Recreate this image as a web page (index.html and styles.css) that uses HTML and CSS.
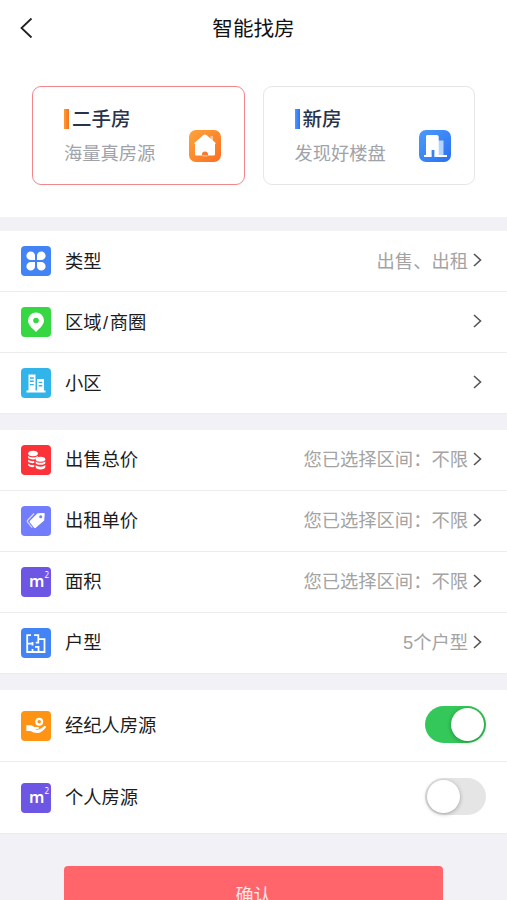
FILE: index.html
```html
<!DOCTYPE html>
<html lang="zh-CN">
<head>
    <meta charset="UTF-8">
    <meta name="viewport" content="width=device-width, initial-scale=1.0">
    <title>智能找房</title>
    <link rel="stylesheet" href="styles.css">
</head>
<body>

    <header class="navbar">
        <a class="back" href="#" aria-label="返回">
            <svg width="14" height="22" viewBox="0 0 14 22"><path d="M12.500 1.500L2.500 11l10 9.500" fill="none" stroke="#222" stroke-width="1.8"/></svg>
        </a>
        <h1>智能找房</h1>
    </header>

    <!-- House type -->
    <div class="cards">
        <div class="card active">
            <div class="card-text">
                <h2 class="orange">二手房</h2>
                <p>海量真房源</p>
            </div>
            <svg class="card-icon" viewBox="0 0 32 32">
                <defs><linearGradient id="og" x1="0" y1="0" x2="1" y2="1"><stop offset="0" stop-color="#ffa43a"/><stop offset="1" stop-color="#fa6f22"/></linearGradient></defs>
                <rect width="32" height="32" rx="7" fill="url(#og)"/>
                <path d="M21.500 6h2.500v6h-2.500z" fill="#ffc795"/>
                <path d="M16 4.500c.5 0 1 .2 1.500.6l8.700 7.500c.8.700.6 1.400-.2 1.400v10c0 1-.5 1.600-1.600 1.600H7.600C6.500 25.600 6 25 6 24V14c-.8 0-1-.7-.2-1.400l8.700-7.500c.5-.4 1-.6 1.500-.6z" fill="#fff"/>
                <circle cx="16" cy="24.400" r="3" fill="#f97a2c"/>
                <path d="M13 25.200h6l-1 1.400h-4z" fill="#ffc9a3"/>
            </svg>
        </div>
        <div class="card">
            <div class="card-text">
                <h2 class="blue">新房</h2>
                <p>发现好楼盘</p>
            </div>
            <svg class="card-icon" viewBox="0 0 32 32">
                <defs><linearGradient id="bg" x1="0" y1="0" x2="1" y2="1"><stop offset="0" stop-color="#4b9bfb"/><stop offset="1" stop-color="#2b70f2"/></linearGradient></defs>
                <rect width="32" height="32" rx="7" fill="url(#bg)"/>
                <path d="M19 10.500h5.500V26H19z" fill="#b5d3ff"/>
                <path d="M8.500 5h9.200c1.300 0 2 .7 2 2v18.500h-4.300v-5.500h-2.800v5.500H7V6.500C7 5.500 7.500 5 8.500 5z" fill="#fff"/>
                <path d="M5 25h7.600v2H5zM15.400 25H28v2H15.400z" fill="#fff"/>
            </svg>
        </div>
    </div>

    <div class="group filters">
        <div class="row">
            <svg class="icon" viewBox="0 0 30 30">
                <rect width="30" height="30" rx="4" fill="#4284f5"/>
                <g fill="#fff">
                    <path d="M14 14h-4.200A4.300 4.300 0 1 1 14 9.800z"/>
                    <path d="M16 14V9.800a4.300 4.300 0 1 1 4.200 4.200z"/>
                    <path d="M14 16v4.200A4.300 4.300 0 1 1 9.800 16z"/>
                    <path d="M16 16h4.200a4.300 4.300 0 1 1-4.200 4.200z"/>
                </g>
            </svg>
            <span class="label">类型</span>
            <span class="value">出售、出租</span>
            <svg class="arrow" viewBox="0 0 9 14"><path d="M1 1l6.500 6L1 13"/></svg>
        </div>
        <div class="row">
            <svg class="icon" viewBox="0 0 30 30">
                <rect width="30" height="30" rx="4" fill="#35d843"/>
                <path d="M15 5.500a8 8 0 0 1 8 8c0 3.800-3.200 7-8 11.500-4.800-4.500-8-7.700-8-11.500a8 8 0 0 1 8-8z" fill="#fff"/>
                <circle cx="15" cy="13.500" r="2.800" fill="#35d843"/>
            </svg>
            <span class="label">区域<span class="slash">/</span>商圈</span>
            <span class="value"></span>
            <svg class="arrow" viewBox="0 0 9 14"><path d="M1 1l6.500 6L1 13"/></svg>
        </div>
        <div class="row">
            <svg class="icon" viewBox="0 0 30 30">
                <rect width="30" height="30" rx="4" fill="#31b4e9"/>
                <path d="M7.500 6.500h7v16.500h-7zM16 11h7v12h-7zM5.500 22.500h19V24.500h-19z" fill="#fff"/>
                <path d="M9 10h3.800M9 13.300h3.800M9 16.600h3.800M17.700 14.400h3.600M17.700 17.700h3.600" stroke="#31b4e9" stroke-width="1.400"/>
            </svg>
            <span class="label">小区</span>
            <span class="value"></span>
            <svg class="arrow" viewBox="0 0 9 14"><path d="M1 1l6.500 6L1 13"/></svg>
        </div>
    </div>

    <div class="group">
        <div class="row">
            <svg class="icon" viewBox="0 0 30 30">
                <rect width="30" height="30" rx="4" fill="#fb3338"/>
                <g fill="#fff">
                    <ellipse cx="12" cy="8.500" rx="4.800" ry="2.700"/>
                    <path d="M7.200 10.800c1.500 2.200 8 2.200 9.600 0v1.200l-3 2.200c-2.500.6-5.500 0-6.600-1.200zM7.200 14.600c1.200 1.400 3.700 1.800 6 1.500v2c-2.500.3-5-.2-6-1.300zM7.200 18.400c1.200 1.400 3.700 1.800 6 1.500v2.200c-3 .4-6-.7-6-2z"/>
                    <ellipse cx="19.500" cy="14.200" rx="4.800" ry="2.500"/>
                    <path d="M14.700 16.200c1.500 2.200 8 2.200 9.600 0v2c-1.500 2-8 2-9.600 0zM14.700 20c1.500 2.200 8 2.200 9.600 0v2.200c-1 3-8.600 3-9.600 0z"/>
                </g>
            </svg>
            <span class="label">出售总价</span>
            <span class="value">您已选择区间：不限</span>
            <svg class="arrow" viewBox="0 0 9 14"><path d="M1 1l6.500 6L1 13"/></svg>
        </div>
        <div class="row">
            <svg class="icon" viewBox="0 0 30 30">
                <rect width="30" height="30" rx="4" fill="#727dfb"/>
                <path d="M16.500 7.200l6-.2c.8 0 1.300.5 1.200 1.200l-.5 6.300-8.400 7.300c-.6.500-1.200.5-1.700-.1l-4.300-5.400c-.4-.6-.3-1 .2-1.500z" fill="#fff"/>
                <circle cx="19.700" cy="10.800" r="1.500" fill="#727dfb"/>
                <path d="M13 7.500l-6.300 6.800c-.6.600-.6 1.200-.1 1.800l4.600 5.600" fill="none" stroke="#d5d8ff" stroke-width="1.300"/>
            </svg>
            <span class="label">出租单价</span>
            <span class="value">您已选择区间：不限</span>
            <svg class="arrow" viewBox="0 0 9 14"><path d="M1 1l6.500 6L1 13"/></svg>
        </div>
        <div class="row">
            <span class="icon area">m<sup>2</sup></span>
            <span class="label">面积</span>
            <span class="value">您已选择区间：不限</span>
            <svg class="arrow" viewBox="0 0 9 14"><path d="M1 1l6.500 6L1 13"/></svg>
        </div>
        <div class="row">
            <svg class="icon" viewBox="0 0 30 30">
                <rect width="30" height="30" rx="4" fill="#4284f5"/>
                <path d="M10 7.200H6.200V24h17.300V11.200h-6.200v3.500h-2.500M13 7.200h4.300v4M6.200 15.700h5M11.500 14v3.500M11.500 21v3M14 18.800h3.500V24" fill="none" stroke="#fff" stroke-width="1.800"/>
            </svg>
            <span class="label">户型</span>
            <span class="value">5个户型</span>
            <svg class="arrow" viewBox="0 0 9 14"><path d="M1 1l6.500 6L1 13"/></svg>
        </div>
    </div>

    <div class="group switches">
        <div class="row">
            <svg class="icon" viewBox="0 0 30 30">
                <rect width="30" height="30" rx="4" fill="#ff9414"/>
                <circle cx="18.200" cy="10.700" r="2.900" fill="none" stroke="#fff" stroke-width="2.200"/>
                <path d="M5.300 14.200h4.500c1.500 0 2.300 1.400 3.600 1.700l3.700.2c1.400.3 1.300 1.800-.1 2l-3.400.2c1.800.6 4 .5 5.500-.4l4-2.600c1.400-.7 2.500.3 1.500 1.500-1.800 2.400-4.300 4.700-7 5.200-3.200.4-6-.6-8-1.900H5.300z" fill="#fff"/>
            </svg>
            <span class="label">经纪人房源</span>
            <span class="switch on"></span>
        </div>
        <div class="row">
            <span class="icon area">m<sup>2</sup></span>
            <span class="label">个人房源</span>
            <span class="switch"></span>
        </div>
    </div>

    <div class="footer">
        <a class="btn">确认</a>
    </div>

</body>
</html>
```
FILE: styles.css
```css
body {
    font-family: "Liberation Sans", "Noto Sans CJK SC", sans-serif;
    font-size: 18.3px;
    background-color: #f2f1f6;
    color: #1c1c1c;
    margin: 0;
    height: 900px;
    overflow: hidden;
}

h1, h2, p {
    margin: 0;
}

.navbar {
    display: grid;
    grid-template-columns: 60px 1fr 60px;
    align-items: center;
    height: 56px;
    background: #fff;
}

.navbar h1 {
    padding-bottom: 3px;
    font-size: 20.6px;
    font-weight: 400;
    text-align: center;
    color: #111;
}

.back {
    display: flex;
    padding-left: 19px;
}

.cards {
    display: grid;
    grid-template-columns: 1fr 1fr;
    gap: 18px;
    padding: 30px 32px 32px;
    background: #fff;
}

.card {
    display: flex;
    justify-content: space-between;
    box-sizing: border-box;
    height: 99px;
    padding: 16px 23px 0 31px;
    border: 1px solid #e6e6e8;
    border-radius: 9px;
}

.card.active {
    border-color: #f3868c;
}

.card h2 {
    display: flex;
    align-items: center;
    gap: 3px;
    height: 32px;
    font-size: 19.5px;
    font-weight: 500;
    line-height: 32px;
    color: #28324a;
}

.card h2::before {
    content: "";
    width: 5px;
    height: 20px;
    background: linear-gradient(90deg, #ff9a30, #f57220);
}

.card h2.blue::before {
    background: linear-gradient(90deg, #4b9bfb, #2b70f2);
}

.card p {
    margin-top: 5px;
    line-height: 28px;
    color: #a0a3a9;
}

.card-icon {
    width: 32px;
    height: 32px;
    margin-top: 27px;
}

.group {
    margin-bottom: 16px;
    background: #fff;
}

.filters {
    margin-top: 14px;
}

.row {
    display: flex;
    align-items: center;
    box-sizing: border-box;
    height: 61px;
    padding: 0 25px 0 21px;
    border-bottom: 1px solid #ececef;
}

.icon {
    flex: none;
    width: 30px;
    height: 30px;
    margin-right: 14px;
}

.area {
    display: flex;
    box-sizing: border-box;
    padding-left: 8px;
    border-radius: 4px;
    background: #6c56e3;
    color: #fff;
    font-family: "Noto Sans", sans-serif;
    font-size: 16px;
    font-weight: 600;
    line-height: 29px;
}

.area sup {
    font-size: 8px;
    font-weight: 400;
    line-height: 16px;
}

.label {
    line-height: 28px;
}

.filters .label, .filters .value {
    padding-top: 2px;
}

.slash {
    padding: 0 1.5px;
}

.value {
    flex: 1;
    text-align: right;
    line-height: 28px;
    color: #a3a3a3;
}

.arrow {
    width: 9px;
    height: 14px;
    margin: 0 0 2px 5px;
    fill: none;
    stroke: #555;
    stroke-width: 1.6;
}

/* Switches */
.switches .row {
    height: 72px;
    padding-right: 21px;
}

.switches .label {
    padding-top: 1px;
}

.switch {
    display: flex;
    box-sizing: border-box;
    width: 61px;
    height: 37px;
    margin: 0 0 2px auto;
    padding: 2px;
    border-radius: 19px;
    background: #e5e5e6;
}

.switch::before {
    content: "";
    width: 33px;
    height: 33px;
    border-radius: 50%;
    background: #fff;
    box-shadow: 0 1px 4px rgba(0, 0, 0, 0.3);
}

.switch.on {
    justify-content: flex-end;
    background: #34c759;
}

.footer {
    padding: 16px 64px 0;
}

.btn {
    display: block;
    height: 60px;
    border-radius: 4px;
    background: #ff656b;
    color: #ffe9e9;
    font-size: 18px;
    line-height: 61px;
    text-align: center;
}
```
